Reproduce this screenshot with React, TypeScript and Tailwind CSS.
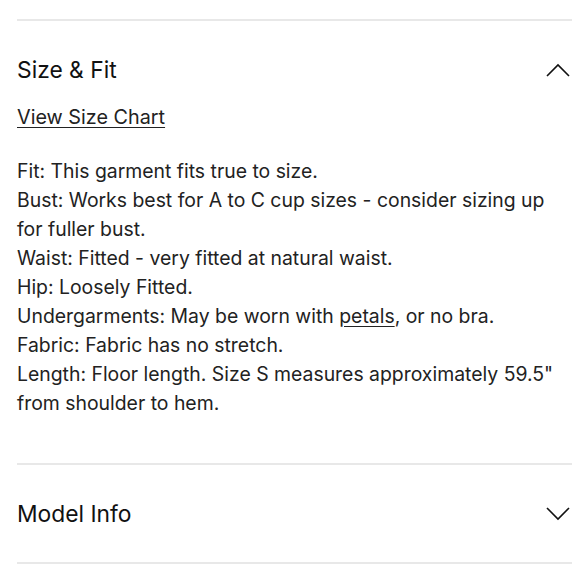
export default function App() {
  const lines = [
    "Fit: This garment fits true to size.",
    "Bust: Works best for A to C cup sizes - consider sizing up for fuller bust.",
    "Waist: Fitted - very fitted at natural waist.",
    "Hip: Loosely Fitted.",
  ];
  return (
    <div className="h-[580px] w-[580px] bg-white pl-[17px] pr-[8px] pt-[19px] text-[#222] [font-family:Inter,'Noto_Sans',sans-serif]">
      <div className="h-[2px] bg-[#e8e8e8]" />
      <div className="flex items-center justify-between pt-[34px]">
        <h2 className="text-[22.8px] leading-[30px] text-[#111]">Size &amp; Fit</h2>
        <svg width="24" height="14" viewBox="0 0 24 14" className="mr-[2px]">
          <path d="M1 13 L12 2 L23 13" fill="none" stroke="#111" strokeWidth="1.6" />
        </svg>
      </div>
      <a className="mt-[19px] inline-block text-[19.8px] leading-[26px] underline underline-offset-[3px]">View Size Chart</a>
      <div className="mt-[27px] w-[556px] text-[19.4px] leading-[29px]">
        {lines.map((l) => (
          <p key={l}>{l}</p>
        ))}
        <p>
          Undergarments: May be worn with <span className="underline underline-offset-[3px]">petals</span>, or no bra.
        </p>
        <p>Fabric: Fabric has no stretch.</p>
        <p>Length: Floor length. Size S measures approximately 59.5" from shoulder to hem.</p>
      </div>
      <div className="mt-[45px] h-[2px] bg-[#e8e8e8]" />
      <div className="flex h-[97px] items-center justify-between">
        <h2 className="text-[22.8px] leading-[30px] text-[#111]">Model Info</h2>
        <svg width="24" height="14" viewBox="0 0 24 14" className="mr-[2px]">
          <path d="M1 1 L12 12 L23 1" fill="none" stroke="#111" strokeWidth="1.6" />
        </svg>
      </div>
      <div className="h-[2px] bg-[#e8e8e8]" />
    </div>
  );
}
